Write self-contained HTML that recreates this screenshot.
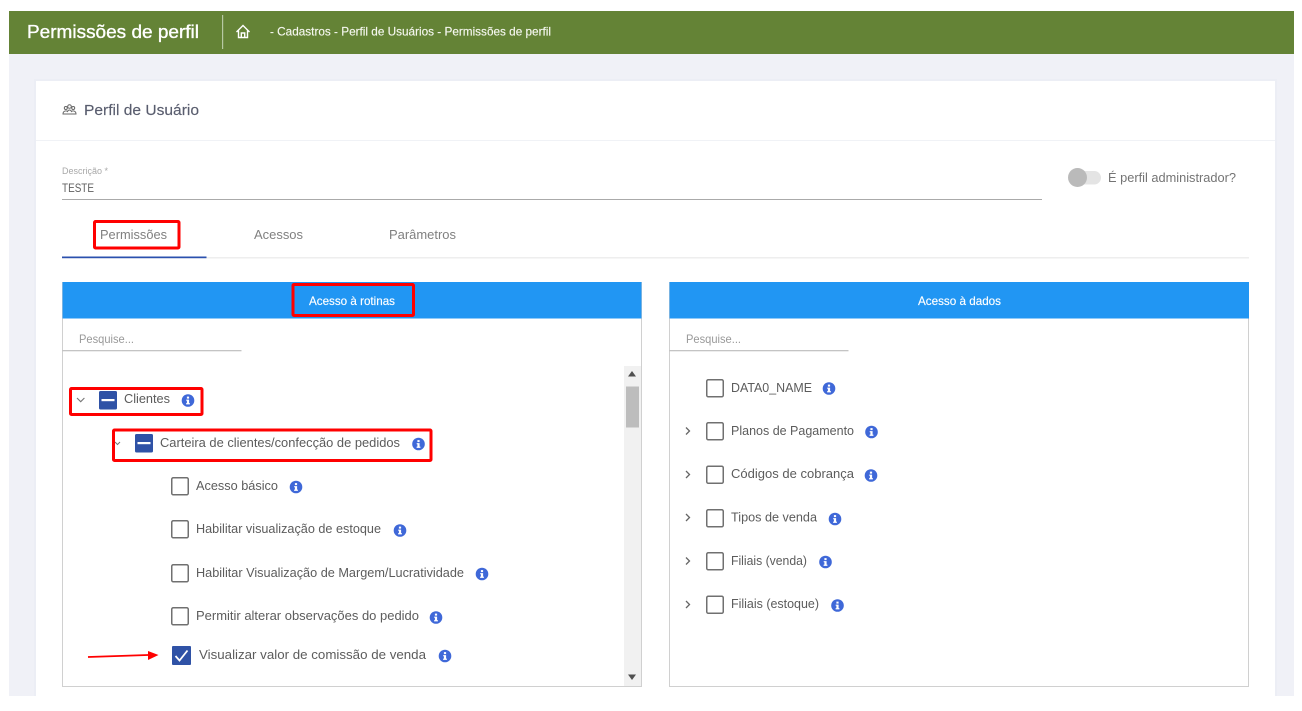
<!DOCTYPE html>
<html lang="pt-BR">
<head>
<meta charset="utf-8">
<title>Permissões de perfil</title>
<style>
html,body{margin:0;padding:0;background:#fff;width:1302px;height:711px;overflow:hidden}
svg{display:block;filter:blur(.35px)}
text{font-family:"Liberation Sans",sans-serif;fill:#5c5c5c;font-size:12.5px}
</style>
</head>
<body>
<svg width="1302" height="711" viewBox="0 0 1302 711" xmlns="http://www.w3.org/2000/svg">
<defs>
<g id="i"><circle r="6.3" fill="#3f68d8"/><rect x="-1.1" y="-3.9" width="2.2" height="2" fill="#fff"/><path d="M-1.8-.9H1.1V2.6H1.9V3.9H-1.9V2.6H-1.1V.3H-1.8Z" fill="#fff"/></g>
<rect id="cb" x="0.75" y="0.75" width="16.5" height="17" rx="1.5" fill="#fff" stroke="#707070" stroke-width="1.5"/>
<g id="ind"><rect width="18" height="18.500" rx="1.5" fill="#2f52a6"/><rect x="2.500" y="8" width="13" height="2.200" fill="#fff"/></g>
<path id="cr" d="M0 0L3.500 3.500L0 7" fill="none" stroke="#666" stroke-width="1.300"/>
<path id="cd" d="M0 0L3.700 3.700L7.400 0" fill="none" stroke="#777" stroke-width="1.100"/>
</defs>

<rect x="9" y="54" width="1285" height="642" fill="#f0f1f7"/>
<rect x="9" y="11" width="1285" height="43" fill="#648336"/>
<text x="27" y="38" textLength="172" lengthAdjust="spacingAndGlyphs" style="fill:#fff;stroke:#fff;stroke-width:.35px;font-size:18px">Permissões de perfil</text>
<rect x="222" y="15" width="1.200" height="34" fill="#b7c9a3"/>
<path d="M236.500 32L243 25.500L249.500 32M238.500 30.500V37.500H247.500V30.500M241.300 37.500V33H244.700V37.500" fill="none" stroke="#fff" stroke-width="1.400"/>
<text x="270" y="35.500" textLength="281" lengthAdjust="spacingAndGlyphs" style="fill:#f5f7ef;stroke:#f5f7ef;stroke-width:.15px;font-size:12px">- Cadastros - Perfil de Usuários - Permissões de perfil</text>

<rect x="34" y="79" width="1243" height="617" fill="#eceef5"/>
<rect x="36" y="81" width="1239" height="615" fill="#fff"/>
<rect x="36" y="140" width="1239" height="1" fill="#f0f2f6"/>
<g fill="none" stroke="#666" stroke-width="1"><circle cx="69.500" cy="106.500" r="1.800"/><circle cx="65.800" cy="108" r="1.500"/><circle cx="73.200" cy="108" r="1.500"/><path d="M63 114C63 110.500 66.500 110.500 67.500 111.500C68.500 109.500 70.500 109.500 71.500 111.500C72.500 110.500 76 110.500 76 114Z"/></g>
<text x="84" y="115" textLength="115" lengthAdjust="spacingAndGlyphs" style="fill:#595d6e;stroke:#595d6e;stroke-width:.15px;font-size:15px">Perfil de Usuário</text>

<text x="62" y="174" textLength="46" lengthAdjust="spacingAndGlyphs" style="fill:#a8a8a8;font-size:9px">Descrição *</text>
<text x="62" y="192" textLength="32" lengthAdjust="spacingAndGlyphs" style="fill:#606060;font-size:12px">TESTE</text>
<rect x="62" y="199" width="980" height="1" fill="#aaa"/>

<rect x="1069" y="171" width="32" height="13.500" rx="6.700" fill="#e4e4e4"/>
<circle cx="1077.500" cy="177.500" r="9.500" fill="#bababa"/>
<text x="1108" y="182" textLength="128" lengthAdjust="spacingAndGlyphs" style="fill:#747474;font-size:13px">É perfil administrador?</text>

<text x="100" y="239" textLength="67" lengthAdjust="spacingAndGlyphs" style="fill:#808080">Permissões</text>
<text x="254" y="239" textLength="49" lengthAdjust="spacingAndGlyphs" style="fill:#808080">Acessos</text>
<text x="389" y="239" textLength="67" lengthAdjust="spacingAndGlyphs" style="fill:#808080">Parâmetros</text>
<rect x="62" y="257" width="1187" height="1.500" fill="#eee"/>
<rect x="62" y="256.500" width="144.500" height="1.700" fill="#2b50ae"/>

<rect x="62.500" y="282.500" width="579" height="404" fill="#fff" stroke="#d0d0d0"/>
<rect x="62.500" y="282" width="579" height="36.500" fill="#2196f3"/>
<text x="309" y="305" textLength="86" lengthAdjust="spacingAndGlyphs" style="fill:#fff;stroke:#fff;stroke-width:.15px;font-size:12px">Acesso à rotinas</text>
<text x="79" y="343" textLength="55" lengthAdjust="spacingAndGlyphs" style="fill:#999;font-size:12px">Pesquise...</text>
<rect x="62" y="350" width="179.500" height="1.300" fill="#c4c4c4"/>

<rect x="624" y="366" width="17" height="320" fill="#f1f1f1"/>
<path d="M632 371L636 376.500H628Z" fill="#505050"/>
<rect x="626" y="386.500" width="13" height="41" fill="#bdbdbd"/>
<path d="M632 680L636 674.500H628Z" fill="#505050"/>

<use href="#cd" x="77" y="398"/>
<use href="#ind" x="99" y="391"/>
<text x="124" y="403" textLength="46" lengthAdjust="spacingAndGlyphs">Clientes</text>
<use href="#i" x="188" y="400.500"/>

<path d="M115 442L117.500 444.500L120 442" fill="none" stroke="#777" stroke-width="1"/>
<use href="#ind" x="135" y="434"/>
<text x="160" y="447" textLength="240" lengthAdjust="spacingAndGlyphs">Carteira de clientes/confecção de pedidos</text>
<use href="#i" x="418.500" y="444"/>

<use href="#cb" x="171" y="477"/>
<text x="196" y="490" textLength="82" lengthAdjust="spacingAndGlyphs">Acesso básico</text>
<use href="#i" x="296" y="487"/>

<use href="#cb" x="171" y="520"/>
<text x="196" y="533" textLength="185" lengthAdjust="spacingAndGlyphs">Habilitar visualização de estoque</text>
<use href="#i" x="400" y="530.500"/>

<use href="#cb" x="171" y="564"/>
<text x="196" y="577" textLength="268" lengthAdjust="spacingAndGlyphs">Habilitar Visualização de Margem/Lucratividade</text>
<use href="#i" x="482" y="574"/>

<use href="#cb" x="171" y="607"/>
<text x="196" y="620" textLength="223" lengthAdjust="spacingAndGlyphs">Permitir alterar observações do pedido</text>
<use href="#i" x="436" y="617.500"/>

<rect x="172" y="646" width="19" height="19" rx="1" fill="#2f52a6"/>
<path d="M175.500 656L179.500 660.500L187.500 650.500" fill="none" stroke="#fff" stroke-width="1.800"/>
<text x="199" y="659" textLength="227" lengthAdjust="spacingAndGlyphs">Visualizar valor de comissão de venda</text>
<use href="#i" x="445" y="656"/>

<rect x="669.500" y="282.500" width="579" height="404" fill="#fff" stroke="#d0d0d0"/>
<rect x="669.500" y="282" width="579.500" height="36.500" fill="#2196f3"/>
<text x="918" y="305" textLength="83" lengthAdjust="spacingAndGlyphs" style="fill:#fff;stroke:#fff;stroke-width:.15px;font-size:12px">Acesso à dados</text>
<text x="686" y="343" textLength="55" lengthAdjust="spacingAndGlyphs" style="fill:#999;font-size:12px">Pesquise...</text>
<rect x="669" y="350" width="179.500" height="1.300" fill="#c4c4c4"/>

<use href="#cb" x="706" y="379"/>
<text x="731" y="392" textLength="81" lengthAdjust="spacingAndGlyphs">DATA0_NAME</text>
<use href="#i" x="829" y="388.500"/>

<use href="#cr" x="686" y="427.500"/>
<use href="#cb" x="706" y="422"/>
<text x="731" y="435" textLength="123" lengthAdjust="spacingAndGlyphs">Planos de Pagamento</text>
<use href="#i" x="871.500" y="432"/>

<use href="#cr" x="686" y="471"/>
<use href="#cb" x="706" y="465.500"/>
<text x="731" y="478" textLength="123" lengthAdjust="spacingAndGlyphs">Códigos de cobrança</text>
<use href="#i" x="871" y="475.500"/>

<use href="#cr" x="686" y="514"/>
<use href="#cb" x="706" y="509"/>
<text x="731" y="521.500" textLength="86" lengthAdjust="spacingAndGlyphs">Tipos de venda</text>
<use href="#i" x="835" y="519"/>

<use href="#cr" x="686" y="557.500"/>
<use href="#cb" x="706" y="552"/>
<text x="731" y="565" textLength="76" lengthAdjust="spacingAndGlyphs">Filiais (venda)</text>
<use href="#i" x="825.500" y="562"/>

<use href="#cr" x="686" y="601"/>
<use href="#cb" x="706" y="595.500"/>
<text x="731" y="608" textLength="88" lengthAdjust="spacingAndGlyphs">Filiais (estoque)</text>
<use href="#i" x="837.500" y="605.500"/>

<g fill="none" stroke="#f00" stroke-width="3">
<rect x="94.500" y="221.500" width="84.500" height="26.500" rx="1"/>
<rect x="293" y="284.500" width="120.500" height="31" rx="1"/>
<rect x="70.500" y="388.500" width="131.500" height="26" rx="1"/>
<rect x="113.500" y="430" width="317.500" height="30.500" rx="1"/>
</g>
<path d="M88 657L148 655" stroke="#f00" stroke-width="1.700" fill="none"/>
<path d="M148 651L158.500 655L148 660Z" fill="#f00"/>
</svg>
</body>
</html>
